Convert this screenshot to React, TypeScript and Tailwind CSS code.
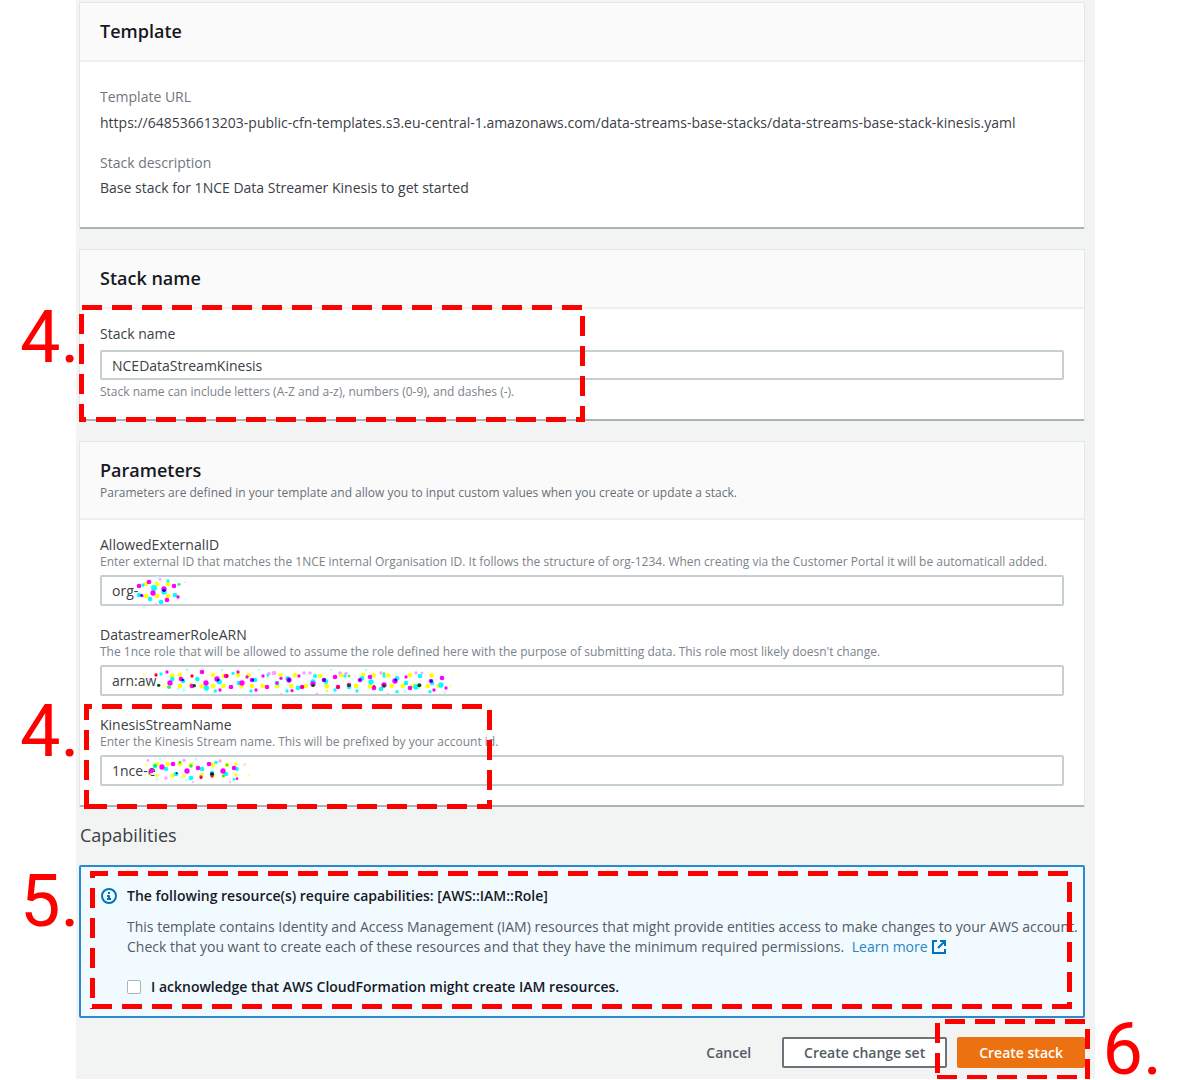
import { useState } from "react";
import type { ReactNode } from "react";

type Dot = [number, number, number?];
type DotGroup = { color: string; dots: Dot[] };

const ORG_DOTS: DotGroup[] = [
  { color: "#ffff00", dots: [[108, 42], [141, 42], [174, 42], [108, 78], [141, 78], [174, 78], [206, 78, 4]] },
  { color: "#00ffff", dots: [[132, 54, 9], [162, 66, 8], [120, 87], [153, 96], [195, 75], [87, 75], [99, 45, 5], [174, 33, 5]] },
  { color: "#ff00ff", dots: [[87, 48], [117, 36], [129, 69, 8], [162, 57, 8], [192, 48], [171, 90], [204, 81, 5], [96, 77, 5]] },
  { color: "#ff9cff", dots: [[150, 28, 4], [138, 102, 3], [225, 37, 2]] },
  { color: "#46ee80", dots: [[207, 43, 5]] },
  { color: "#0000dd", dots: [[162, 61, 5], [94, 76, 3]] },
  { color: "#c0ffff", dots: [[227, 86, 3], [141, 22, 4]] },
];

const ARN_DOTS: DotGroup[] = [
  { color: "#ffffa0", dots: [[102, 30, 5], [111, 64, 4], [162, 63, 6], [1022, 63, 4], [1029, 27, 3]] },
  { color: "#ffff00", dots: [[187, 32], [210, 63], [210, 30], [243, 60], [275, 64], [309, 30], [309, 64], [340, 63], [342, 33], [384, 30], [394, 64], [416, 31], [426, 63], [458, 63], [502, 63], [512, 31], [544, 63], [555, 30], [587, 63], [631, 33], [651, 64], [651, 78, 4], [694, 31], [738, 63], [759, 30], [780, 64], [791, 31], [835, 31], [845, 63], [878, 63], [900, 30], [910, 63], [953, 63], [965, 31], [986, 63]] },
  { color: "#00ffff", dots: [[153, 27, 5], [187, 42], [219, 48], [262, 42], [289, 69, 8], [328, 50, 8], [316, 78, 5], [369, 25, 5], [387, 54], [423, 78, 5], [435, 45], [474, 30, 5], [501, 54, 7], [533, 40], [531, 78, 5], [564, 69], [609, 51, 8], [615, 33, 6], [648, 50], [675, 75, 5], [705, 33, 5], [717, 66, 7], [741, 78, 5], [756, 40], [783, 51, 8], [813, 72], [822, 33, 5], [861, 40], [888, 54], [861, 80, 5], [918, 66, 8], [930, 33], [960, 80, 5], [966, 54], [993, 60, 8]] },
  { color: "#ff00ff", dots: [[171, 21, 5], [180, 54, 8], [213, 42], [246, 63], [288, 54, 8], [276, 21], [321, 42, 8], [363, 66], [330, 75, 5], [348, 33], [384, 21, 5], [396, 54, 8], [411, 36, 5], [426, 45], [471, 66], [438, 75, 5], [459, 33, 5], [501, 54, 5], [513, 40, 5], [537, 45, 8], [576, 66], [546, 77, 5], [567, 33, 5], [609, 57, 8], [642, 45], [684, 66], [675, 36], [717, 60], [750, 45], [780, 36, 7], [792, 69], [855, 48, 8], [822, 60, 8], [888, 36, 5], [900, 69], [963, 48], [996, 39], [1008, 69, 5], [972, 75, 5]] },
  { color: "#ff9cff", dots: [[492, 24], [477, 25, 5], [582, 24, 5], [600, 24, 5], [690, 24, 5], [708, 25, 5], [813, 24, 5], [918, 24, 5], [936, 24, 4], [513, 87, 3], [621, 87, 4], [835, 87, 3], [942, 90, 3], [118, 42, 3]] },
  { color: "#b0ffff", dots: [[231, 14, 5], [336, 15, 4], [447, 15, 4], [663, 15, 4], [768, 15, 4], [222, 75, 5], [885, 80, 5], [1004, 82, 4], [204, 72, 4]] },
  { color: "#ff0020", dots: [[138, 30, 5], [246, 33, 5], [351, 33, 5], [684, 66, 5], [577, 66, 4], [792, 64, 4]] },
  { color: "#0010dd", dots: [[218, 45, 4], [324, 45, 4], [428, 45, 4], [537, 45, 5], [642, 45, 5], [750, 45, 4], [857, 45, 4], [964, 48, 4]] },
  { color: "#065018", dots: [[146, 61, 5], [253, 62, 5], [609, 61, 5], [717, 61, 5], [822, 62, 5], [928, 61, 6]] },
  { color: "#40ee60", dots: [[177, 66, 6], [822, 26, 4], [717, 33, 4]] },
];

const NCE_DOTS: DotGroup[] = [
  { color: "#ffff00", dots: [[141, 30], [173, 30], [141, 64, 5], [209, 30], [189, 64], [222, 66, 5], [275, 64], [243, 33], [309, 64], [309, 33], [351, 33], [342, 64], [378, 63, 5], [378, 30, 5]] },
  { color: "#00ffff", dots: [[135, 36, 7], [168, 45, 7], [198, 60], [243, 72], [276, 45, 7], [306, 57], [318, 25, 5], [348, 60, 7], [381, 45, 6], [372, 76, 4]] },
  { color: "#ff00ff", dots: [[124, 51, 7], [156, 39, 8], [189, 30], [231, 51, 8], [264, 42, 7], [297, 30], [339, 51, 8], [372, 42], [273, 69, 5], [381, 74, 4]] },
  { color: "#ff9cff", dots: [[168, 72, 5], [222, 19, 5], [330, 21, 5], [114, 19, 4], [249, 84, 3], [405, 31, 4], [360, 84, 3]] },
  { color: "#ffffa0", dots: [[108, 33, 5], [118, 66, 5], [417, 64, 4], [406, 30, 4]] },
  { color: "#b0ffff", dots: [[150, 15, 4], [258, 15, 4], [140, 76, 4], [228, 78, 4]] },
  { color: "#20ee30", dots: [[135, 35, 5], [210, 25, 4], [243, 36, 5], [351, 33, 4], [340, 66, 4]] },
  { color: "#001060", dots: [[200, 58, 3], [306, 61, 6]] },
  { color: "#ff0020", dots: [[306, 67, 4], [273, 71, 4]] },
];

function Scribble({
  groups,
  width,
  className,
}: {
  groups: DotGroup[];
  width: number;
  className: string;
}) {
  return (
    <svg
      className={`pointer-events-none absolute left-[10px] ${className}`}
      width={width}
      height={35}
      viewBox={`0 0 ${width * 3} 105`}
      aria-hidden="true"
    >
      {groups.map((g) => (
        <g key={g.color} fill={g.color}>
          {g.dots.map(([x, y, r = 7], i) => (
            <circle key={i} cx={x} cy={y} r={r} />
          ))}
        </g>
      ))}
    </svg>
  );
}

type HighlightProps = {
  className: string;
  top?: [number, number];
  right?: [number, number];
  bottom?: [number, number];
  left?: [number, number];
};

/* dashed red frame, each side is [start, dash offset] */
function Highlight({
  className,
  top = [0, 0],
  right = [0, 0],
  bottom = [0, 0],
  left = [0, 0],
}: HighlightProps) {
  return (
    <div className={`pointer-events-none absolute ${className}`}>
      <svg
        className="block h-full w-full overflow-hidden"
        stroke="#ff0000"
        strokeWidth={10}
        strokeDasharray="20 10"
        aria-hidden="true"
      >
        <line x1={top[0]} y1="0" x2="100%" y2="0" strokeDashoffset={top[1]} />
        <line x1="100%" y1={right[0]} x2="100%" y2="100%" strokeDashoffset={right[1]} />
        <line x1={bottom[0]} y1="100%" x2="100%" y2="100%" strokeDashoffset={bottom[1]} />
        <line x1="0" y1={left[0]} x2="0" y2="100%" strokeDashoffset={left[1]} />
      </svg>
    </div>
  );
}

function StepNumber({ className, children }: { className: string; children: ReactNode }) {
  return (
    <span
      className={`absolute font-[Roboto,sans-serif] text-[72px] leading-[52px] font-normal text-[#ff0000] ${className}`}
    >
      {children}
    </span>
  );
}

function Card({
  title,
  description,
  children,
}: {
  title: string;
  description?: string;
  children: ReactNode;
}) {
  return (
    <section className="relative rounded-xs border border-[#e3e7e7] border-b-2 border-b-[#a9b2b4] bg-white">
      <header className="border-b-2 border-[#eef0f0] bg-[#fafafa] px-5 pt-[15px] pb-4">
        <h2 className="text-lg leading-[26px] font-semibold text-[#16191f]">{title}</h2>
        {description && (
          <p className="mt-[2px] pb-px text-xs leading-4 text-[#687078]">{description}</p>
        )}
      </header>
      {children}
    </section>
  );
}

function Field({
  id,
  label,
  hint,
  initial,
  children,
}: {
  id: string;
  label: string;
  hint: string;
  initial: string;
  children: ReactNode;
}) {
  const [value, setValue] = useState(initial);

  return (
    <div>
      <label htmlFor={id} className="block text-sm leading-[18px] text-[#3b4046]">
        {label}
      </label>
      <p className="mb-[5px] text-xs leading-4 text-[#7b838a]">{hint}</p>
      <div className="relative">
        <input
          id={id}
          type="text"
          className="block h-[31px] w-full rounded-xs border-2 border-[#c6cfd0] bg-white px-[10px] text-sm text-[#3b4046] outline-none"
          value={value}
          onChange={(e) => setValue(e.target.value)}
        />
        {children}
      </div>
    </div>
  );
}

export default function App() {
  const [stackName, setStackName] = useState("NCEDataStreamKinesis");
  const [acknowledged, setAcknowledged] = useState(false);

  return (
    <div className="bg-white pr-[83px] pl-[76px] font-['Open_Sans',sans-serif]">
      <main className="flex flex-col bg-[#f2f3f3] pt-[2px] pr-[10px] pb-[11px] pl-[3px]">
        {/* template */}
        <Card title="Template">
          <dl className="px-5 pt-[25px] pb-[29px] text-sm leading-5 text-[#3b4046]">
            <dt className="text-[#6f767d]">Template URL</dt>
            <dd className="mt-[6px] mb-5">
              https://648536613203-public-cfn-templates.s3.eu-central-1.amazonaws.com/data-streams-base-stacks/data-streams-base-stack-kinesis.yaml
            </dd>
            <dt className="text-[#6f767d]">Stack description</dt>
            <dd className="mt-[5px]">Base stack for 1NCE Data Streamer Kinesis to get started</dd>
          </dl>
        </Card>

        {/* stack name */}
        <div className="relative mt-5">
          <Card title="Stack name">
            <div className="px-5 pt-[15px] pb-[19px]">
              <label htmlFor="stack-name" className="block text-sm leading-5 text-[#3b4046]">
                Stack name
              </label>
              <input
                id="stack-name"
                type="text"
                className="mt-[6px] block h-[30px] w-full rounded-xs border-2 border-[#c6cfd0] bg-white px-[10px] text-sm text-[#3b4046] outline-none"
                value={stackName}
                onChange={(e) => setStackName(e.target.value)}
              />
              <p className="mt-1 text-xs leading-4 text-[#7b838a]">
                Stack name can include letters (A-Z and a-z), numbers (0-9), and dashes (-).
              </p>
            </div>
          </Card>
          <Highlight
            className="-bottom-px left-0 h-[117px] w-[506px]"
            top={[3, 0]}
            right={[11, 0]}
            bottom={[0, 13]}
            left={[9, 0]}
          />
          <StepNumber className="-left-[59px] bottom-[57px]">4.</StepNumber>
        </div>

        {/* parameters */}
        <div className="relative mt-5">
          <Card
            title="Parameters"
            description="Parameters are defined in your template and allow you to input custom values when you create or update a stack."
          >
            <div className="space-y-5 px-5 pt-4 pb-[19px]">
              <Field
                id="external-id"
                label="AllowedExternalID"
                hint="Enter external ID that matches the 1NCE internal Organisation ID. It follows the structure of org-1234. When creating via the Customer Portal it will be automaticall added."
                initial="org-"
              >
                <Scribble groups={ORG_DOTS} width={100} className="-top-[5px]" />
              </Field>
              <Field
                id="role-arn"
                label="DatastreamerRoleARN"
                hint="The 1nce role that will be allowed to assume the role defined here with the purpose of submitting data. This role most likely doesn't change."
                initial="arn:aw"
              >
                <Scribble groups={ARN_DOTS} width={350} className="top-0" />
              </Field>
              <Field
                id="stream-name"
                label="KinesisStreamName"
                hint="Enter the Kinesis Stream name. This will be prefixed by your account id."
                initial="1nce-e"
              >
                <Scribble groups={NCE_DOTS} width={150} className="-top-px" />
              </Field>
            </div>
          </Card>
          <Highlight
            className="-bottom-[2px] left-[5px] h-[105px] w-[408px]"
            top={[0, 12]}
            right={[6, 0]}
            bottom={[3, 0]}
            left={[0, 4]}
          />
          <StepNumber className="-left-[59px] bottom-[49px]">4.</StepNumber>
        </div>

        <h2 className="mt-[15px] ml-px text-lg leading-[26px] text-[#3b4046]">Capabilities</h2>

        {/* capabilities alert */}
        <div className="relative mt-[17px]">
          <div className="flex gap-[10px] rounded-xs border-2 border-[#2b8acb] bg-[#f1faff] py-[19px] pr-1 pl-5 text-sm leading-5">
            <svg
              className="mt-[2px] h-4 w-4 shrink-0"
              viewBox="0 0 16 16"
              fill="none"
              stroke="#0073bb"
              strokeWidth="2"
              aria-hidden="true"
            >
              <circle cx="8" cy="8" r="7" />
              <path d="M8 11V8H6M10 11H6" strokeLinejoin="round" />
              <path d="M8 4v2" />
            </svg>
            <div>
              <h3 className="font-semibold text-[#16191f]">
                The following resource(s) require capabilities: [AWS::IAM::Role]
              </h3>
              <p className="mt-[11px] text-[#545b64]">
                This template contains Identity and Access Management (IAM) resources that might
                provide entities access to make changes to your AWS account. Check that you want to
                create each of these resources and that they have the minimum required permissions.{" "}
                <a href="#learn-more" className="ml-1 inline-block text-[#2b84c4]">
                  Learn more{" "}
                  <svg
                    className="inline h-4 w-4 align-[-3px]"
                    viewBox="0 0 16 16"
                    fill="none"
                    stroke="#0073bb"
                    strokeWidth="2"
                    aria-hidden="true"
                  >
                    <path d="M6 2H2v12h12v-4M9 2h5v5M14 2L7 9" />
                  </svg>
                </a>
              </p>
              <label className="mt-5 flex items-center gap-[10px] font-semibold text-[#16191f]">
                <input
                  type="checkbox"
                  className="h-[14px] w-[14px] appearance-none rounded-xs border border-[#aab7b8] bg-white checked:bg-[#0073bb]"
                  checked={acknowledged}
                  onChange={(e) => setAcknowledged(e.target.checked)}
                />
                I acknowledge that AWS CloudFormation might create IAM resources.
              </label>
            </div>
          </div>
          <Highlight
            className="top-[6px] right-[13px] bottom-[9px] left-[11px]"
            top={[0, 2]}
            right={[11, 0]}
            bottom={[2, 0]}
            left={[0, 13]}
          />
          <StepNumber className="-left-[59px] bottom-[90px]">5.</StepNumber>
        </div>

        {/* actions */}
        <div className="relative mt-[19px] flex items-center justify-end gap-[10px] text-sm font-semibold text-[#545b64]">
          <button type="button" className="mr-[21px] h-[31px]">
            Cancel
          </button>
          <button
            type="button"
            className="h-[31px] rounded-xs border-2 border-[#6b727a] bg-white px-5"
          >
            Create change set
          </button>
          <button type="button" className="h-[31px] rounded-xs bg-[#ec7211] px-[22px] text-white">
            Create stack
          </button>
          <Highlight
            className="-top-[18px] -right-[5px] h-[61px] w-[155px]"
            top={[10, 0]}
            right={[10, 0]}
            bottom={[2, 0]}
            left={[4, 0]}
          />
          <StepNumber className="-right-[77px] -bottom-[8px]">6.</StepNumber>
        </div>
      </main>
    </div>
  );
}
